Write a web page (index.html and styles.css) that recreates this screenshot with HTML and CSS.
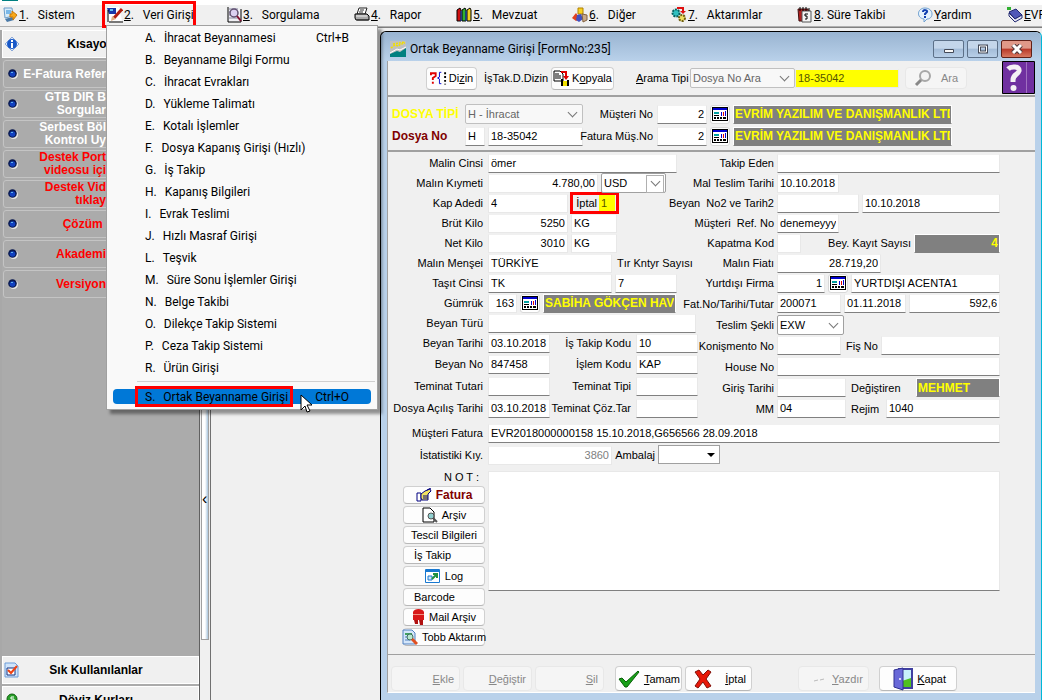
FILE: index.html
```html
<!DOCTYPE html>
<html lang="tr">
<head>
    <meta charset="UTF-8">
    <meta name="viewport" content="width=device-width, initial-scale=1.0">
    <title>Ortak Beyanname Girişi</title>
    <link rel="stylesheet" href="styles.css">
</head>
<body>
    <!-- shared icons -->
    <svg class="defs" width="0" height="0">
        <symbol id="grid-icon" viewBox="0 0 16 14">
            <path fill="#000" d="M0 0h16v14H0z"/>
            <path fill="#fff" d="M1 3h14v10H1z"/>
            <path fill="#0000d0" d="M1 1h14v2H1z"/>
            <path fill="#00a0a0" d="M2 5h5v2H2z"/>
            <path fill="#000" d="M2 8h5v1H2zM2 10h2v2H2zM5 10h2v2H5zM8 10h2v2H8zM11 10h3v2h-3z"/>
            <path fill="#0000d0" d="M9 5h1v4H9zM13 4h1v5h-1z"/>
            <path fill="#e00000" d="M11 5h1v4h-1z"/>
        </symbol>
        <symbol id="bullet" viewBox="0 0 10 10">
            <circle cx="5.500" cy="5.500" r="4.500" fill="#e8e8e8"/>
            <circle cx="4.500" cy="4.500" r="4.300" fill="#0a1a50"/>
            <circle cx="4.500" cy="5" r="2.800" fill="#1040c0"/>
            <path fill="#5fb0f0" d="M3 3h2v1H3z"/>
        </symbol>
    </svg>

    <div class="top-strip"><span></span></div>
    <nav class="menubar">
        <button>
            <svg width="16" height="16" viewBox="0 0 16 16"><path fill="#d8ecfa" stroke="#6a9cc8" d="M2 1h8l1 8-8 2z"/><path fill="#7ab8e8" d="M4 3h5v4H4z"/><path fill="#4a7aa8" d="M3 12l7-2 2 3-7 2z"/><path fill="#f8a818" stroke="#c87808" d="M10 4l5 4-4 5v-3H8V7h2z"/></svg>
            <span><u>1</u>.&nbsp;&nbsp; Sistem</span>
        </button>
        <button class="marked">
            <svg width="16" height="16" viewBox="0 0 16 16"><path fill="#fff" d="M1 0h11l3 14H2z"/><path fill="#1838a8" d="M0 1h9v6H2z"/><path fill="#60c0f0" d="M3 2h3v2H3z"/><path stroke="#b02010" stroke-width="3" d="M15 2L7 11"/><path fill="#e0b080" d="M5 9l4 3-5 2z"/><path stroke="#000" d="M2 15h14M1 3v12"/></svg>
            <span><u>2</u>.&nbsp;&nbsp; Veri Girişi</span>
        </button>
        <button>
            <svg width="16" height="16" viewBox="0 0 16 16"><path fill="#f0f0f4" stroke="#000" d="M2 0v15h13V2"/><path stroke="#8888a0" d="M3 2h9M3 5h2M3 8h2M3 11h9"/><circle cx="8" cy="6" r="4" fill="#dcd0f0" stroke="#605070" stroke-width="1.500"/><path stroke="#801030" stroke-width="2" d="M11 9l4 5"/></svg>
            <span><u>3</u>.&nbsp;&nbsp; Sorgulama</span>
        </button>
        <button>
            <svg width="16" height="16" viewBox="0 0 16 16"><path fill="#fff" stroke="#222" d="M5 1h8l-2 6H3z"/><path fill="#aaa" stroke="#000" d="M1 7h12l2 2v4H2l-1-2z"/><path stroke="#eee" d="M2 9h11"/><path stroke="#333" d="M3 13h11M6 3h4M5 5h4"/></svg>
            <span><u>4</u>.&nbsp;&nbsp; Rapor</span>
        </button>
        <button>
            <svg width="16" height="16" viewBox="0 0 16 16"><path fill="#d01010" stroke="#000" d="M1 3l3-2 1 2v11H1z"/><path fill="#30b030" stroke="#000" d="M6 3l3-2 1 2v11H6z"/><path fill="#f0d020" stroke="#000" d="M11 3l3-2 1 2v11h-4z"/><path stroke="#1040c0" d="M5 4v10M10 4v10"/></svg>
            <span><u>5</u>.&nbsp;&nbsp; Mevzuat</span>
        </button>
        <button>
            <svg width="16" height="16" viewBox="0 0 16 16"><path fill="#f8d020" stroke="#b08000" d="M6 1h5v6H6z"/><path fill="#e04020" d="M0 11l4-5 4 6-4 2z"/><path fill="#4050c0" d="M5 8l4-1 2 5-4 3-3-2z"/><path fill="#c8a888" stroke="#806040" d="M10 7l5 1v5l-4 2z"/></svg>
            <span><u>6</u>.&nbsp;&nbsp; Diğer</span>
        </button>
        <button>
            <svg width="16" height="16" viewBox="0 0 16 16"><circle cx="5" cy="6" r="3.500" fill="#30c0c0" stroke="#086060" stroke-width="2" stroke-dasharray="2 1"/><circle cx="11" cy="11" r="3" fill="#f0e060" stroke="#706010" stroke-width="2" stroke-dasharray="2 1"/><path fill="none" stroke="#e01010" stroke-width="2" d="M6 1h6v4"/><path fill="#e01010" d="M9 4h6l-3 3z"/></svg>
            <span><u>7</u>.&nbsp;&nbsp; Aktarımlar</span>
        </button>
        <button>
            <svg width="16" height="16" viewBox="0 0 16 16"><path fill="#b02020" stroke="#401010" d="M1 2h10v12H2z"/><path fill="#f4f4f4" stroke="#555" d="M5 4h9v11H5z"/><path stroke="#000" d="M3 0v4M6 0v4M9 0v4M12 1v3"/><path fill="none" stroke="#000" d="M11 7H8v2h2v3H8"/></svg>
            <span><u>8</u>. Süre Takibi</span>
        </button>
        <button>
            <svg width="16" height="16" viewBox="0 0 16 16"><path fill="#e4f2fc" stroke="#70a0d0" d="M8 1c9 0 9 11 2 11l-3 3v-3C-1 11 0 1 8 1z"/><path fill="none" stroke="#1040b0" stroke-width="2" d="M6 5c0-3 5-2 4 0L8 7v1M8 9v2"/></svg>
            <span><u>Y</u>ardım</span>
        </button>
        <button>
            <svg width="16" height="16" viewBox="0 0 16 16"><path fill="#5058b8" stroke="#202870" d="M2 5l7-3 6 6-7 4z"/><path fill="#e8e8f4" stroke="#202870" d="M2 6l6 6 7-4v3l-7 4-6-6z"/><path fill="#30b030" d="M0 0h4v3H0z"/></svg>
            <span><u>E</u>VRİM</span>
        </button>
        <ul class="dropdown">
            <li><button><span>A.</span><span>İhracat Beyannamesi</span><kbd>Ctrl+B</kbd></button></li>
            <li><button><span>B.</span><span>Beyanname Bilgi Formu</span></button></li>
            <li><button><span>C.</span><span>İhracat Evrakları</span></button></li>
            <li><button><span>D.</span><span>Yükleme Talimatı</span></button></li>
            <li><button><span>E.</span><span>Kotalı İşlemler</span></button></li>
            <li><button><span>F.</span><span>Dosya Kapanış Girişi (Hızlı)</span></button></li>
            <li><button><span>G.</span><span>İş Takip</span></button></li>
            <li><button><span>H.</span><span>Kapanış Bilgileri</span></button></li>
            <li><button><span>I.</span><span>Evrak Teslimi</span></button></li>
            <li><button><span>J.</span><span>Hızlı Masraf Girişi</span></button></li>
            <li><button><span>L.</span><span>Teşvik</span></button></li>
            <li><button><span>M.</span><span>Süre Sonu İşlemler Girişi</span></button></li>
            <li><button><span>N.</span><span>Belge Takibi</span></button></li>
            <li><button><span>O.</span><span>Dilekçe Takip Sistemi</span></button></li>
            <li><button><span>P.</span><span>Ceza Takip Sistemi</span></button></li>
            <li><button><span>R.</span><span>Ürün Girişi</span></button></li>
            <li class="sep"></li>
            <li><button class="selected"><span>S.</span><span>Ortak Beyanname Girişi</span><kbd>Ctrl+O</kbd></button>
                <span class="red-box"></span>
                <svg class="cursor" width="13" height="20" viewBox="0 0 13 20"><path fill="#fff" stroke="#000" d="M1 1v15l4-4 2 6 3-1-3-6h5z"/></svg>
            </li>
        </ul>
    </nav>

    <div class="main">
        <aside class="sidebar">
            <button class="side-head">
                <svg width="16" height="16" viewBox="0 0 16 16"><path fill="#dce8f8" stroke="#8aa8d8" d="M8 1l7 7-7 7-7-7z"/><circle cx="8" cy="8" r="5" fill="#1858c8"/><path stroke="#fff" stroke-width="2" d="M8 4v2M8 7v5"/></svg>
                <span>Kısayollar</span>
            </button>
            <ul class="links">
                <li><svg><use href="#bullet"/></svg><a href="#">E-Fatura Refer</a></li>
                <li><svg><use href="#bullet"/></svg><a href="#">GTB DIR B<br>Sorgular</a></li>
                <li><svg><use href="#bullet"/></svg><a href="#">Serbest Böl<br>Kontrol Uy</a></li>
                <li class="hot"><svg><use href="#bullet"/></svg><a href="#">Destek Port<br>videosu içi</a></li>
                <li class="hot"><svg><use href="#bullet"/></svg><a href="#">Destek Vid<br>tıklay</a></li>
                <li class="hot"><svg><use href="#bullet"/></svg><a href="#">Çözüm&nbsp;</a></li>
                <li class="hot"><svg><use href="#bullet"/></svg><a href="#">Akademi</a></li>
                <li class="hot"><svg><use href="#bullet"/></svg><a href="#">Versiyon</a></li>
            </ul>
            <button class="side-head">
                <svg width="16" height="16" viewBox="0 0 16 16"><path fill="#cfe4fa" stroke="#6c9cd8" d="M1 1h10l3 3v11H1z"/><path fill="#fff" stroke="#103080" d="M3 6h8v7H3z"/><path fill="none" stroke="#f04010" stroke-width="2" d="M4 8l3 3 6-7"/></svg>
                <span>Sık Kullanılanlar</span>
            </button>
            <button class="side-head">
                <svg width="16" height="16" viewBox="0 0 16 16"><circle cx="8" cy="7" r="5" fill="#28a028" stroke="#106010"/><path stroke="#fff" fill="none" d="M10 5H7v2h3v2H6"/></svg>
                <span>Döviz Kurları</span>
            </button>
        </aside>
        <div class="splitter"><div class="thumb"></div><span>‹</span></div>

        <div class="desktop">
            <form class="window">
                <header class="titlebar">
                    <svg width="16" height="16" viewBox="0 0 16 16"><path fill="#c0c0c0" d="M0 0h16v16H0z"/><path fill="#008080" d="M0 16v-3l7-3 3 1 6-4v9z"/><path stroke="#fff" d="M0 12l7-4 3 1 6-3"/><path stroke="#f0e000" stroke-width="1.500" stroke-dasharray="2 1" d="M1 7l4-3 3 1 3-2 4-1M3 3l12-2"/></svg>
                    <h1>Ortak Beyanname Girişi [FormNo:235]</h1>
                    <button type="button" aria-label="Küçült"><svg width="12" height="10"><path fill="#f8f8f8" stroke="#444a58" d="M1.500 5.500h9v3h-9z"/></svg></button>
                    <button type="button" aria-label="Büyüt"><svg width="12" height="10"><path fill="none" stroke="#444a58" stroke-width="3" d="M2.500 2h7v6h-7z"/><path fill="none" stroke="#fff" d="M2.500 2h7v6h-7z"/></svg></button>
                    <button type="button" class="close" aria-label="Pencereyi kapat"><svg width="12" height="10"><path stroke="#53393b" stroke-width="5" d="M2 1l8 8M10 1L2 9"/><path stroke="#fff" stroke-width="3" d="M2 1l8 8M10 1L2 9"/></svg></button>
                </header>
                <div class="client">
                    <div class="toolbar">
                        <button type="button" class="btn dizin"><svg width="17" height="14" viewBox="0 0 18 14"><path fill="none" stroke="#e00000" stroke-width="2" d="M1 4V2h5v3L3 7v2M3 11v2"/><path fill="none" stroke="#0000d0" d="M12 1h-2v5L8 7l2 1v5h2"/><path stroke="#000" stroke-width="2" stroke-dasharray="2 2" d="M16 1v13"/></svg><span>Di<u>z</u>in</span></button>
                        <span class="tool-text">İşTak.D.Dizin</span>
                        <button type="button" class="btn kopyala"><svg width="16" height="16" viewBox="0 0 16 16"><path fill="#fff" stroke="#000" d="M1 1h6l3 3v7H1z"/><path stroke="#000" d="M2 4h4M2 6h6M2 8h6"/><path fill="none" stroke="#e00000" stroke-width="2" d="M8 2h5v5"/><path fill="#e00000" d="M10 6h6l-3 4z"/><path stroke="#000" stroke-width="2" d="M9 9v7M15 10v6"/><path fill="#f0e000" d="M10 11h4v5h-4z"/></svg><span>K<u>o</u>pyala</span></button>
                        <label class="search-label" for="arama"><u>A</u>rama Tipi</label>
                        <span class="pick w105"><select id="arama" disabled><option>Dosya No Ara</option></select></span>
                        <input class="yellow w104" type="text" value="18-35042" aria-label="Aranan dosya no">
                        <button type="button" class="btn ara" disabled><svg width="18" height="18" viewBox="0 0 18 18"><path stroke="#888" stroke-width="3" d="M2 16l6-6"/><circle cx="11" cy="7" r="5" fill="#f4f4f4" stroke="#a8a8a8" stroke-width="2"/></svg><span>Ara</span></button>
                        <button type="button" class="help" aria-label="Yardım"><svg width="33" height="33" viewBox="0 0 33 33"><path fill="#7030a0" stroke="#000" d="M.5.5h32v32H.5z"/><path stroke="#a070c0" d="M24.500 1v31"/><path fill="none" stroke="#f4f0f4" stroke-width="5" d="M6 8c3-3 12-3 11 2-1 4-6 3-6 9v2"/><circle cx="11.500" cy="27" r="3" fill="#f4f0f4"/></svg></button>
                    </div>

                    <div class="file-head">
                        <div class="row22">
                            <label class="tipi" for="tip">DOSYA TİPİ</label>
                            <span class="pick w118"><select id="tip" disabled><option>H - İhracat</option></select></span>
                            <label class="mid" for="musteri">Müşteri No</label>
                            <input class="under num w50" id="musteri" type="text" value="2">
                            <button type="button" class="lookup" aria-label="Müşteri seç"><svg><use href="#grid-icon"/></svg></button>
                            <input class="dark w219" type="text" value="EVRİM YAZILIM VE DANIŞMANLIK LTD" aria-label="Müşteri adı" readonly>
                        </div>
                        <div class="row22">
                            <label class="dosya" for="dosya">Dosya No</label>
                            <input class="under w20" type="text" value="H" aria-label="Dosya tipi">
                            <input class="under w95" id="dosya" type="text" value="18-35042">
                            <label class="mid" for="fatmus">Fatura Müş.No</label>
                            <input class="under num w50" id="fatmus" type="text" value="2">
                            <button type="button" class="lookup" aria-label="Fatura müşterisi seç"><svg><use href="#grid-icon"/></svg></button>
                            <input class="dark w219" type="text" value="EVRİM YAZILIM VE DANIŞMANLIK LTD" aria-label="Fatura müşterisi adı" readonly>
                        </div>
                    </div>

                    <div class="fields">
                        <div class="left-col">
                            <div class="row20"><label for="cins">Malin Cinsi</label><input class="under w189" id="cins" type="text" value="ömer"></div>
                            <div class="row20"><label for="kiymet">Malın Kıymeti</label><input class="num w110" id="kiymet" type="text" value="4.780,00"><span class="pick boxed w65"><select aria-label="Döviz"><option>USD</option></select></span></div>
                            <div class="row20"><label for="kap">Kap Adedi</label><input class="w80" id="kap" type="text" value="4"><div class="iptal"><label for="iptal">İptal</label><input class="yellow" id="iptal" type="text" value="1"></div></div>
                            <div class="row20"><label for="brut">Brüt Kilo</label><input class="num w80" id="brut" type="text" value="5250"><input class="w46" type="text" value="KG" aria-label="Brüt birim"></div>
                            <div class="row20"><label for="net">Net Kilo</label><input class="num w80" id="net" type="text" value="3010"><input class="w46" type="text" value="KG" aria-label="Net birim"></div>
                            <div class="row20"><label for="mensei">Malın Menşei</label><input class="w124" id="mensei" type="text" value="TÜRKİYE"><label class="inline" for="tir">Tır Kntyr Sayısı</label></div>
                            <div class="row20"><label for="tasit">Taşıt Cinsi</label><input class="under w124" id="tasit" type="text" value="TK"><input class="under w62" id="tir" type="text" value="7"></div>
                            <div class="row20"><label for="gumruk">Gümrük</label><input class="num w29" id="gumruk" type="text" value="163"><button type="button" class="lookup" aria-label="Gümrük seç"><svg><use href="#grid-icon"/></svg></button><input class="dark w133" type="text" value="SABİHA GÖKÇEN HAV" aria-label="Gümrük adı" readonly></div>
                            <div class="row20"><label for="tur">Beyan Türü</label><input class="under w208" id="tur" type="text"></div>
                            <div class="row20"><label for="btar">Beyan Tarihi</label><input class="under w62" id="btar" type="text" value="03.10.2018"><label class="second" for="itk">İş Takip Kodu</label><input class="under w62" id="itk" type="text" value="10"></div>
                            <div class="row22"><label for="bno">Beyan No</label><input class="under w62" id="bno" type="text" value="847458"><label class="second" for="ikod">İşlem Kodu</label><input class="under w62" id="ikod" type="text" value="KAP"></div>
                            <div class="row22"><label for="tut">Teminat Tutari</label><input class="under w62" id="tut" type="text"><label class="second" for="ttip">Teminat Tipi</label><input class="under w62" id="ttip" type="text"></div>
                            <div class="row22"><label for="dat">Dosya Açılış Tarihi</label><input class="under w62" id="dat" type="text" value="03.10.2018"><label class="second" for="tct">Teminat Çöz.Tar</label><input class="under w62" id="tct" type="text"></div>
                        </div>
                        <div class="right-col">
                            <div class="row20"><label for="takip">Takip Eden</label><input class="under grow" id="takip" type="text"></div>
                            <div class="row20"><label for="mtt">Mal Teslim Tarihi</label><input class="w62" id="mtt" type="text" value="10.10.2018"></div>
                            <div class="row20"><label for="bn2">Beyan&nbsp; No2 ve Tarih2</label><input class="under w82" id="bn2" type="text"><input class="under grow" type="text" value="10.10.2018" aria-label="Tarih2"></div>
                            <div class="row20"><label for="ref">Müşteri&nbsp; Ref. No</label><input class="under w62" id="ref" type="text" value="denemeyyy"></div>
                            <div class="row20"><label for="kkod">Kapatma Kod</label><input class="w24" id="kkod" type="text"><label class="kayit" for="kayit">Bey. Kayıt Sayısı</label><input class="dark num grow" id="kayit" type="text" value="4" readonly></div>
                            <div class="row20"><label for="fiat">Malın Fiatı</label><input class="under num w104" id="fiat" type="text" value="28.719,20"></div>
                            <div class="row20"><label for="yfirma">Yurtdışı Firma</label><input class="under num w48" id="yfirma" type="text" value="1"><button type="button" class="lookup" aria-label="Firma seç"><svg><use href="#grid-icon"/></svg></button><input class="under grow" type="text" value="YURTDIŞI ACENTA1" aria-label="Firma adı"></div>
                            <div class="row21"><label for="fatno">Fat.No/Tarihi/Tutar</label><input class="under w64" id="fatno" type="text" value="200071"><input class="under w62" type="text" value="01.11.2018" aria-label="Fatura tarihi"><input class="under num grow" type="text" value="592,6" aria-label="Fatura tutarı"></div>
                            <div class="row21"><label for="teslim">Teslim Şekli</label><span class="pick w67"><select id="teslim"><option>EXW</option></select></span></div>
                            <div class="row21"><label for="kon">Konişmento No</label><input class="under w64" id="kon" type="text"><label class="inline w32" for="fis">Fiş No</label><input class="under grow" id="fis" type="text"></div>
                            <div class="row21"><label for="house">House No</label><input class="under grow" id="house" type="text"></div>
                            <div class="row21"><label for="giris">Giriş Tarihi</label><input class="under w69" id="giris" type="text"><label class="inline w62" for="degis">Değiştiren</label><input class="dark grow" id="degis" type="text" value="MEHMET" readonly></div>
                            <div class="row21"><label for="mm">MM</label><input class="under w69" id="mm" type="text" value="04"><label class="inline w32" for="rejim">Rejim</label><input class="under grow" id="rejim" type="text" value="1040"></div>
                        </div>
                    </div>

                    <div class="wide">
                        <div class="row22"><label for="mfat">Müşteri Fatura</label><input class="under grow" id="mfat" type="text" value="EVR2018000000158 15.10.2018,G656566 28.09.2018"></div>
                        <div class="row22"><label for="ist">İstatistiki Kıy.</label><input class="num w124" id="ist" type="text" value="3860" disabled><label class="ambalaj" for="amb">Ambalaj</label><span class="pick classic w62"><select id="amb"><option></option></select></span></div>
                    </div>

                    <div class="notes">
                        <div class="actions">
                            <label for="not">N O T :</label>
                            <button type="button" class="btn fatura"><svg width="16" height="14" viewBox="0 0 16 14"><path fill="#fff" stroke="#000080" d="M1 5h4v8H1z"/><path fill="#f0e060" stroke="#000080" d="M5 6l4-3 5-2 1 2-3 3v6H6l-1-2z"/><path stroke="#000080" d="M7 8h5M7 10h5M11 2l4-2"/></svg><span>Fatura</span></button>
                            <button type="button" class="btn"><svg width="16" height="16" viewBox="0 0 16 16"><path fill="#fff" stroke="#000" d="M1 1h7l4 4v10H1z"/><circle cx="9" cy="9" r="3" fill="#90d0d0" stroke="#555"/><path stroke="#555" stroke-width="2" d="M11 11l4 4"/></svg><span>Arşiv</span></button>
                            <button type="button" class="btn">Tescil Bilgileri</button>
                            <button type="button" class="btn start">İş Takip</button>
                            <button type="button" class="btn log"><svg width="15" height="14" viewBox="0 0 15 14"><path fill="#fff" stroke="#1878d0" d="M.5.5h14v13H.5z"/><path fill="#1878d0" d="M1 1h13v2H1z"/><path fill="#cfe4f8" stroke="#1878d0" d="M3 7h4v4H3z"/><path stroke="#209040" stroke-width="2" d="M7 10l5-5M8 5h4v4" fill="none"/></svg><span>Log</span></button>
                            <button type="button" class="btn start">Barcode</button>
                            <button type="button" class="btn"><svg width="13" height="16" viewBox="0 0 13 16"><path fill="#d81818" d="M1 3c1-4 10-4 11 0v8H1z"/><path fill="#f09080" d="M1 5h11v1H1z"/><path fill="#b01010" d="M2 11h4v4H3zM7 11h4v5H8z"/></svg><span>Mail Arşiv</span></button>
                            <button type="button" class="btn"><svg width="16" height="16" viewBox="0 0 16 16"><path fill="#d4e6fa" stroke="#5080c0" d="M1 1h9l3 3v11H1z"/><path fill="#40a060" d="M3 4h7v2H3z"/><path stroke="#5080c0" d="M3 8h3M3 11h5"/><circle cx="8" cy="8" r="3" fill="#b8e8d0" stroke="#407060"/><path stroke="#e05020" stroke-width="3" d="M10 10l5 5"/></svg><span>Tobb Aktarım</span></button>
                        </div>
                        <textarea id="not"></textarea>
                    </div>

                    <footer class="buttons">
                        <button type="button" class="btn" disabled><span><u>E</u>kle</span></button>
                        <button type="button" class="btn" disabled><span><u>D</u>eğiştir</span></button>
                        <button type="button" class="btn" disabled><span><u>S</u>il</span></button>
                        <button type="button" class="btn tamam"><svg width="22" height="18" viewBox="0 0 22 18"><path fill="#18a018" stroke="#086008" d="M1 9l3-1 4 4L20 1l1 1L9 17H7z"/></svg><span><u>T</u>amam</span></button>
                        <button type="button" class="btn vazgec"><svg width="20" height="20" viewBox="0 0 20 20"><path fill="#e81808" stroke="#801008" d="M2 3l4-2 4 5 5-5 3 2-5 7 5 7-4 2-4-6-5 6-3-2 5-7z"/></svg><span><u>İ</u>ptal</span></button>
                        <button type="button" class="btn yazdir" disabled><svg width="10" height="6"><path stroke="#bbb" d="M0 5l4-1M6 4l4-1"/></svg><span><u>Y</u>azdır</span></button>
                        <button type="button" class="btn kapat"><svg width="20" height="24" viewBox="0 0 20 24"><path fill="#c8f0fc" stroke="#4040a0" stroke-width="2" d="M6 2h13v19H6z"/><path fill="#50c020" d="M9 14l9-3v9H9z"/><path fill="#6868d8" stroke="#303090" d="M1 3l9-2v22l-9-3z"/><circle cx="7" cy="12" r="1" fill="#fff"/></svg><span><u>K</u>apat</span></button>
                    </footer>
                </div>
            </form>
        </div>
    </div>
</body>
</html>
```
FILE: styles.css
```css
* {
    box-sizing: border-box;
}

body {
    margin: 0;
    height: 100vh;
    display: flex;
    flex-direction: column;
    overflow: hidden;
    background: #f0f0f0;
    color: #000;
    font-family: "Liberation Sans", sans-serif;
    font-size: 11px;
}

button, input, select, textarea {
    font: inherit;
    color: inherit;
    margin: 0;
}

button {
    background: none;
    border: none;
    padding: 0;
    white-space: nowrap;
}

ul {
    list-style: none;
    margin: 0;
    padding: 0;
}

svg {
    flex: none;
    fill: none;
}

.defs {
    position: absolute;
}

/* menu bar */
.top-strip {
    height: 5px;
    flex: none;
    background: #fff;
}

.top-strip span {
    display: block;
    width: 16px;
    height: 1px;
    margin-left: 2px;
    background: #008080;
}

.menubar {
    position: relative;
    z-index: 2;
    flex: none;
    display: grid;
    grid-template-columns: 70px 84px 93px 67px 81px 64px 91px 85px 55px 60px;
    gap: 35px;
    height: 21px;
    padding-left: 2px;
    font-family: Roboto, "Open Sans", sans-serif;
    font-size: 12px;
    line-height: 18px;
}

.menubar > button {
    display: flex;
    align-items: center;
    gap: 1px;
    height: 19px;
}

.menubar > .marked {
    outline: 3px solid #f00;
    outline-offset: 2px;
    height: 17px;
    margin-top: 1px;
}

.dropdown {
    position: absolute;
    left: 106px;
    top: 20px;
    width: 272px;
    height: 385px;
    padding: 2px 6px;
    background: #f9f9f9;
    border: 1px solid #a0a0a0;
    box-shadow: 4px 4px 3px rgba(0, 0, 0, 0.4);
}

.dropdown li {
    position: relative;
    height: 22px;
}

.dropdown button {
    display: flex;
    align-items: center;
    gap: 8px;
    width: 100%;
    height: 20px;
    padding-left: 32px;
    padding-right: 22px;
    text-align: left;
}

.dropdown kbd {
    font: inherit;
    margin-left: auto;
}

.dropdown .sep {
    height: 2px;
    margin: 0 -4px 7px 24px;
    border-bottom: 1px solid #d0d0d0;
}

.dropdown .selected {
    height: 15px;
    margin-top: 1px;
    background: #0078d7;
    border-radius: 4px;
}

.red-box {
    position: absolute;
    left: 22px;
    top: -3px;
    width: 158px;
    height: 21px;
    border: 3px solid #f00;
}

.cursor {
    position: absolute;
    left: 187px;
    top: 5px;
}

.main {
    flex: 1;
    min-height: 0;
    display: flex;
    border-top: 1px solid #b0b0b0;
}

/* left panel */
.sidebar {
    width: 200px;
    flex: none;
    display: flex;
    flex-direction: column;
    margin-top: 3px;
    border-left: 2px solid #a8a8a8;
    border-right: 1px solid #606060;
    background: #ababab;
    font-size: 12px;
    font-weight: bold;
    overflow: hidden;
}

.side-head {
    flex: none;
    display: flex;
    align-items: center;
    height: 28px;
    padding-left: 1px;
    background: #f0f0f0;
    border: 1px solid #fff;
    margin-bottom: 2px;
}

.side-head span {
    flex: 1;
    padding-right: 26px;
    text-align: center;
}

.side-head:last-child {
    margin-bottom: -14px;
}

.links {
    flex: 1;
    color: #fff;
}

.links li {
    display: flex;
    align-items: center;
    justify-content: space-between;
    height: 28px;
    margin: 0 1px 2px;
    padding: 0 91px 0 4px;
    border: 1px solid #c4c4c4;
    border-radius: 3px;
    line-height: 13px;
    text-align: right;
    white-space: nowrap;
}

.links svg {
    width: 10px;
    height: 10px;
}

.links a {
    color: inherit;
    text-decoration: none;
}

.links .hot {
    color: #f00;
}

.splitter {
    position: relative;
    width: 11px;
    flex: none;
    padding-bottom: 60px;
    border-right: 1px solid #707070;
    margin-top: 3px;
}

.splitter .thumb {
    height: 100%;
    width: 8px;
    margin-left: 1px;
    background: linear-gradient(to right, #fff 50%, #a8c4dc);
    border: 1px solid #a0a0a0;
    border-top: none;
}

.splitter span {
    position: absolute;
    left: 2px;
    bottom: 192px;
    font-size: 16px;
}

/* entry window */
.desktop {
    flex: 1;
    min-width: 0;
    display: flex;
    padding: 3px 0 0 169px;
    background: #f0f0f0;
    border-top: 1px solid #808080;
}

.window {
    flex: 1;
    min-width: 0;
    display: flex;
    flex-direction: column;
    padding: 0 6px 7px;
    background: #b9d1ea;
    border: 1px solid #000;
    border-right-color: #00b8d8;
    border-bottom: none;
    border-radius: 6px 6px 0 0;
}

.titlebar {
    flex: none;
    display: flex;
    align-items: center;
    gap: 3px;
    height: 29px;
    margin: 0 -6px;
    padding: 4px 9px 0;
    border-radius: 6px 6px 0 0;
    background: linear-gradient(#99b4d1, #b9d1ea);
}

.titlebar h1 {
    flex: 1;
    margin: 0 0 0 1px;
    font: 12px/16px Roboto, "Open Sans", sans-serif;
}

.titlebar button {
    display: flex;
    align-items: center;
    justify-content: center;
    width: 31px;
    height: 18px;
    background: linear-gradient(#c4d6ea 45%, #a3bcd8 50%, #b8cfe8);
    border: 1px solid #5c7088;
    border-radius: 2px;
}

.titlebar .close {
    background: linear-gradient(#e09888 45%, #b83828 50%, #d87860);
    border-color: #602018;
}

.client {
    flex: 1;
    min-height: 0;
    display: flex;
    flex-direction: column;
    background: #f0f0f0;
    border-left: 1px solid #a0a0a0;
    border-bottom: 1px solid #fff;
}

.btn {
    display: flex;
    align-items: center;
    justify-content: center;
    gap: 4px;
    background: #fdfdfd;
    border: 1px solid #d0d0d0;
    border-bottom-color: #b8b8b8;
    border-radius: 4px;
}

.btn:disabled {
    background: #f5f5f5;
    border-color: #e8e8e8;
    color: #888;
}

.toolbar {
    flex: none;
    display: flex;
    align-items: center;
    height: 36px;
    padding-left: 38px;
    border-bottom: 2px solid #a0a0a0;
}

.dizin {
    width: 51px;
    height: 23px;
    gap: 2px;
}

.tool-text {
    width: 66px;
    margin: 0 1px 0 7px;
    white-space: nowrap;
}

.kopyala {
    width: 63px;
    height: 23px;
    gap: 3px;
}

.search-label {
    width: 54px;
    margin-left: 22px;
    white-space: nowrap;
}

.ara {
    width: 62px;
    height: 22px;
    margin-left: 6px;
    gap: 9px;
}

.help {
    display: flex;
    align-self: flex-start;
    margin-left: auto;
}

/* inputs */
input {
    flex: none;
    height: 19px;
    padding: 0 2px 1px;
    background: #fff;
    border: 1px solid #e8e8e8;
    border-top-color: #f0f0f0;
    outline: none;
}

input:disabled {
    color: #808080;
}

.under {
    border-bottom-color: #808080;
}

.num {
    text-align: right;
}

.yellow {
    background: #ff0;
    color: #555500;
}

.dark {
    background: #808080;
    border: 1px solid #fff;
    border-bottom-color: #808080;
    padding: 0 1px;
    color: #ff0;
    font-size: 12px;
    font-weight: bold;
}

.grow {
    flex: 1;
    min-width: 0;
    width: 0;
}

.pick {
    position: relative;
    display: flex;
    flex: none;
    height: 20px;
}

.pick select {
    appearance: none;
    width: 100%;
    height: 20px;
    padding: 0 2px;
    background: #fff;
    border: 1px solid #a0a0a0;
    border-radius: 2px;
}

.pick select:disabled {
    background: #f8f8f8;
    border-color: #c0c0c0;
    color: #666;
    opacity: 1;
}

.pick::after {
    content: "";
    position: absolute;
    right: 7px;
    top: 5px;
    width: 6px;
    height: 6px;
    border: solid #777;
    border-width: 0 1px 1px 0;
    transform: rotate(45deg);
    pointer-events: none;
}

.boxed::before {
    content: "";
    position: absolute;
    right: 2px;
    top: 2px;
    width: 16px;
    height: 16px;
    border: 1px solid #b0b0b0;
    pointer-events: none;
}

.classic select {
    border-radius: 0;
    height: 19px;
}

.classic::after {
    width: 0;
    height: 0;
    top: 8px;
    right: 5px;
    border: 4px solid transparent;
    border-top-color: #000;
    transform: none;
}

.lookup {
    display: flex;
    align-items: center;
    justify-content: center;
    flex: none;
    width: 20px;
    height: 19px;
    background: #fff;
    border: 1px solid #d8d8d8;
    border-radius: 3px;
}

.lookup svg {
    width: 16px;
    height: 14px;
}

.row20, .row21, .row22 {
    display: flex;
    align-items: center;
    gap: 3px;
    height: 20px;
}

.row21 {
    height: 21px;
}

.row22 {
    height: 22px;
}

.file-head {
    flex: none;
    padding: 6px 0 3px 4px;
    border-bottom: 2px solid #a0a0a0;
}

.file-head label {
    width: 69px;
    margin-right: 1px;
    white-space: nowrap;
}

.file-head .tipi {
    color: #ff0;
    font-size: 12px;
    font-weight: bold;
}

.file-head .dosya {
    color: #800000;
    font-size: 12px;
    font-weight: bold;
}

.file-head .mid {
    display: flex;
    justify-content: flex-end;
    width: 67px;
}

.fields {
    flex: none;
    display: flex;
    padding: 1px 35px 3px 0;
}

.left-col {
    width: 310px;
    flex: none;
}

.right-col {
    flex: 1;
    min-width: 0;
}

/* captions sit against their field and may run out to the left */
.left-col label, .right-col label, .wide label {
    flex: none;
    display: flex;
    justify-content: flex-end;
    width: 95px;
    margin-right: 2px;
    white-space: nowrap;
}

.right-col label {
    width: 76px;
    margin-right: 0;
}

.left-col .second {
    width: 78px;
}

.left-col .inline, .right-col .inline {
    width: auto;
    justify-content: flex-start;
    margin-left: 2px;
    margin-right: 0;
}

.right-col .kayit {
    width: 107px;
}

.wide .ambalaj {
    width: 40px;
    margin-right: 0;
}

.iptal {
    display: flex;
    align-items: center;
    width: 49px;
    height: 22px;
    margin-left: -1px;
    border: 3px solid #f00;
}

.left-col .iptal label {
    width: 24px;
}

.iptal .yellow {
    width: 16px;
    height: 16px;
    border: none;
}

.wide {
    flex: none;
    padding-right: 35px;
}

.notes {
    flex: 1;
    min-height: 0;
    display: flex;
    gap: 3px;
    padding: 5px 35px 0 15px;
}

.actions {
    display: flex;
    flex-direction: column;
    gap: 2px;
    width: 82px;
}

.actions label {
    height: 13px;
    padding-right: 6px;
    line-height: 12px;
    text-align: right;
}

.actions .btn {
    height: 18px;
    line-height: 14px;
}

.actions .fatura {
    color: #800000;
    font-size: 12px;
    font-weight: bold;
}

.actions .start {
    justify-content: flex-start;
    padding-left: 10px;
}

.actions .log {
    height: 20px;
    gap: 5px;
}

textarea {
    flex: 1;
    height: 120px;
    padding: 2px;
    background: #fff;
    border: 1px solid #e8e8e8;
    border-bottom-color: #808080;
    resize: none;
}

.buttons {
    flex: none;
    display: flex;
    gap: 3px;
    height: 38px;
    padding: 11px 0 0 3px;
    border-top: 1px solid #a0a0a0;
}

.buttons .btn {
    width: 69px;
    height: 25px;
    justify-content: flex-end;
    padding-right: 5px;
}

.buttons .tamam {
    width: 67px;
    margin-left: 8px;
    padding-right: 1px;
}

.buttons .vazgec {
    width: 67px;
    gap: 12px;
}

.buttons .yazdir {
    width: 71px;
    margin-left: 43px;
    gap: 8px;
}

.buttons .kapat {
    width: 78px;
    margin-left: 7px;
    padding-right: 10px;
}

/* field widths */
.w20 { width: 20px; }
.w24 { width: 24px; }
.w29 { width: 29px; }
.right-col .w32 { width: 32px; }
.w46 { width: 46px; }
.w48 { width: 48px; }
.w50 { width: 50px; }
.w62, .right-col .w62 { width: 62px; }
.w64 { width: 64px; }
.w65 { width: 65px; }
.w67 { width: 67px; }
.w69 { width: 69px; }
.w80 { width: 80px; }
.w82 { width: 82px; }
.w95 { width: 95px; }
.w104 { width: 104px; }
.w105 { width: 105px; }
.w110 { width: 110px; }
.w118 { width: 118px; }
.w124 { width: 124px; }
.w133 { width: 133px; }
.w189 { width: 189px; }
.w208 { width: 208px; }
.w219 { width: 219px; }
```
